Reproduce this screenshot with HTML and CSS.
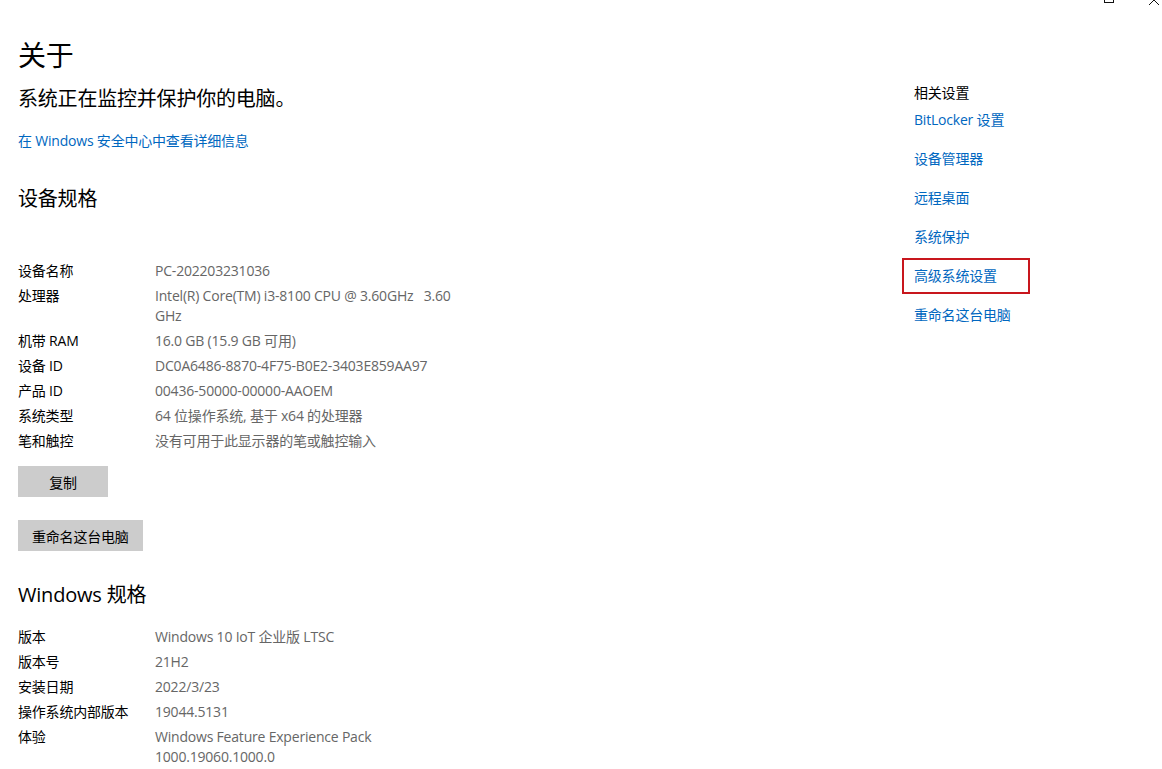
FILE: index.html
```html
<!DOCTYPE html>
<html lang="zh-CN">
  <head>
    <meta charset="UTF-8" />
    <meta name="viewport" content="width=device-width, initial-scale=1.0" />
    <title>关于</title>
    <link rel="stylesheet" href="styles.css">
  </head>
  <body>
    <!-- window caption buttons, cut off at the top edge -->
    <div class="caption">
      <svg width="67" height="12" viewBox="0 0 67 12">
        <rect x="9.5" y="-6.5" width="9" height="9" fill="none" stroke="#111" stroke-width="1" />
        <path d="M54 -5 L64 5 M64 -5 L54 5" stroke="#111" stroke-width="1" fill="none" />
      </svg>
    </div>

    <div class="page">
      <main class="about">
        <h1 class="about__title">关于</h1>
        <p class="about__status">系统正在监控并保护你的电脑。</p>
        <a href="#" class="link about__security">在 Windows 安全中心中查看详细信息</a>

        <h2 class="section-title section-title--device">设备规格</h2>
        <dl class="specs specs--device">
          <div class="specs__row">
            <dt class="specs__label">设备名称</dt>
            <dd class="specs__value">PC-202203231036</dd>
          </div>
          <div class="specs__row">
            <dt class="specs__label">处理器</dt>
            <dd class="specs__value">Intel(R) Core(TM) i3-8100 CPU @ 3.60GHz&nbsp;&nbsp; 3.60 GHz</dd>
          </div>
          <div class="specs__row">
            <dt class="specs__label">机带 RAM</dt>
            <dd class="specs__value">16.0 GB (15.9 GB 可用)</dd>
          </div>
          <div class="specs__row">
            <dt class="specs__label">设备 ID</dt>
            <dd class="specs__value">DC0A6486-8870-4F75-B0E2-3403E859AA97</dd>
          </div>
          <div class="specs__row">
            <dt class="specs__label">产品 ID</dt>
            <dd class="specs__value">00436-50000-00000-AAOEM</dd>
          </div>
          <div class="specs__row">
            <dt class="specs__label">系统类型</dt>
            <dd class="specs__value">64 位操作系统, 基于 x64 的处理器</dd>
          </div>
          <div class="specs__row">
            <dt class="specs__label">笔和触控</dt>
            <dd class="specs__value">没有可用于此显示器的笔或触控输入</dd>
          </div>
        </dl>

        <div class="actions">
          <button class="btn btn--copy">复制</button>
          <button class="btn btn--rename">重命名这台电脑</button>
        </div>

        <h2 class="section-title section-title--windows">Windows 规格</h2>
        <dl class="specs specs--windows">
          <div class="specs__row">
            <dt class="specs__label">版本</dt>
            <dd class="specs__value">Windows 10 IoT 企业版 LTSC</dd>
          </div>
          <div class="specs__row">
            <dt class="specs__label">版本号</dt>
            <dd class="specs__value">21H2</dd>
          </div>
          <div class="specs__row">
            <dt class="specs__label">安装日期</dt>
            <dd class="specs__value">2022/3/23</dd>
          </div>
          <div class="specs__row">
            <dt class="specs__label">操作系统内部版本</dt>
            <dd class="specs__value">19044.5131</dd>
          </div>
          <div class="specs__row">
            <dt class="specs__label">体验</dt>
            <dd class="specs__value">Windows Feature Experience Pack 1000.19060.1000.0</dd>
          </div>
        </dl>
      </main>

      <aside class="related">
        <p class="related__title">相关设置</p>
        <ul class="related__list">
          <li class="related__item"><a href="#" class="link">BitLocker 设置</a></li>
          <li class="related__item"><a href="#" class="link">设备管理器</a></li>
          <li class="related__item"><a href="#" class="link">远程桌面</a></li>
          <li class="related__item"><a href="#" class="link">系统保护</a></li>
          <li class="related__item related__item--marked"><a href="#" class="link">高级系统设置</a></li>
          <li class="related__item"><a href="#" class="link">重命名这台电脑</a></li>
        </ul>
      </aside>
    </div>
  </body>
</html>
```

FILE: styles.css
```css
* {
  margin: 0;
  padding: 0;
  box-sizing: border-box;
}

body {
  background-color: #fff;
  color: #000;
  font-family: "Open Sans", "Noto Sans CJK SC", sans-serif;
  font-size: 14px;
  line-height: 20px;
  letter-spacing: -0.2px;
  overflow: hidden;
}

.caption {
  position: absolute;
  top: 0;
  right: 0;
  line-height: 0;
}

.page {
  display: flex;
  padding: 0 0 0 18px;
}

.link {
  color: #0067c0;
  text-decoration: none;
}

/* ***** left column ***** */

.about {
  flex: 1;
  padding-top: 37px;
}
.about__title {
  font-size: 28px;
  font-weight: 400;
  line-height: 36px;
}
.about__status {
  margin-top: 12px;
  font-size: 20px;
  line-height: 28px;
}
.about__security {
  display: inline-block;
  margin-top: 18px;
}

.section-title {
  font-size: 20px;
  font-weight: 400;
  line-height: 28px;
}
.section-title--device {
  margin-top: 34px;
}
.section-title--windows {
  margin-top: 30px;
}

.specs {
  display: flex;
  flex-direction: column;
  gap: 5px;
}
.specs--device {
  margin-top: 48px;
}
.specs--windows {
  margin-top: 18px;
}
.specs__row {
  display: flex;
}
.specs__label {
  width: 137px;
  flex-shrink: 0;
}
.specs__value {
  width: 300px;
  color: #666;
}

.actions {
  display: flex;
  flex-direction: column;
  align-items: flex-start;
  gap: 23px;
  margin-top: 15px;
}
.btn {
  min-width: 90px;
  height: 31px;
  padding: 0 14px;
  border: none;
  background-color: #ccc;
  color: #000;
  font-family: inherit;
  font-size: 14px;
  letter-spacing: -0.2px;
}

/* ***** right column ***** */

.related {
  width: 248px;
  padding-top: 83px;
}
.related__list {
  list-style: none;
  display: flex;
  flex-direction: column;
  gap: 19px;
  margin-top: 7px;
}
.related__item--marked {
  align-self: flex-start;
  width: 128px;
  margin: -8px 0 -8px -12px;
  padding: 6px 0 6px 10px;
  border: 2px solid #c8161d;
}
```
